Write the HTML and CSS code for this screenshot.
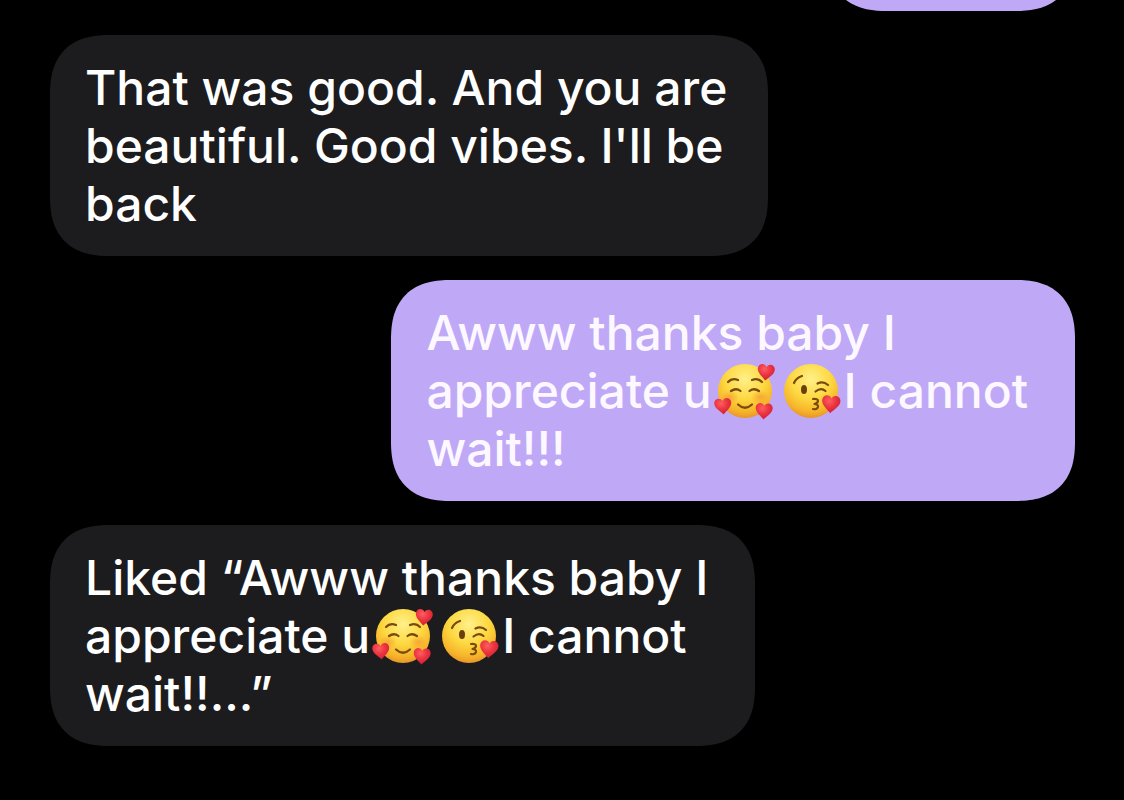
FILE: index.html
```html
<!DOCTYPE html>
<html lang="en">
<head>
  <meta charset="UTF-8">
  <meta name="viewport" content="width=device-width, initial-scale=1.0">
  <title>Messages</title>
  <link rel="stylesheet" href="styles.css">
</head>
<body>
  <!-- shared emoji drawings -->
  <svg class="defs" width="0" height="0" aria-hidden="true">
    <defs>
      <radialGradient id="skin" cx="50%" cy="28%" r="74%">
        <stop offset="0" stop-color="#fff08a"/>
        <stop offset="0.5" stop-color="#fdd840"/>
        <stop offset="0.82" stop-color="#f6b32a"/>
        <stop offset="1" stop-color="#e59028"/>
      </radialGradient>
      <radialGradient id="blush">
        <stop offset="0" stop-color="#f5822d" stop-opacity="0.5"/>
        <stop offset="1" stop-color="#f5822d" stop-opacity="0"/>
      </radialGradient>
      <radialGradient id="red" cx="40%" cy="30%" r="75%">
        <stop offset="0" stop-color="#fb6060"/>
        <stop offset="0.5" stop-color="#ec3340"/>
        <stop offset="1" stop-color="#c91f35"/>
      </radialGradient>
      <path id="heart" fill="url(#red)" d="M0 8.500C-2 6-8.500 2-8.500-3C-8.500-8-2-9.500 0-5C2-9.500 8.500-8 8.500-3C8.500 2 2 6 0 8.500Z"/>
      <symbol id="hearts-face" viewBox="0 0 66 58">
        <circle cx="33" cy="29" r="27" fill="url(#skin)"/>
        <ellipse cx="18" cy="35" rx="9" ry="7" fill="url(#blush)"/>
        <ellipse cx="48" cy="35" rx="9" ry="7" fill="url(#blush)"/>
        <g fill="none" stroke="#7a4a0c" stroke-width="2.200" stroke-linecap="round">
          <path d="M16 20Q20 15.500 26 18"/>
          <path d="M40 18Q46 15.500 50 20"/>
          <path d="M19 29Q24 25.500 28.500 29"/>
          <path d="M37.500 29Q42 25.500 47 29"/>
          <path d="M26 42.500Q33 49 40 42.500"/>
        </g>
        <use href="#heart" transform="translate(54 10) rotate(6)"/>
        <use href="#heart" transform="translate(11 44) rotate(-5)"/>
        <use href="#heart" transform="translate(52 49) rotate(4)"/>
      </symbol>
      <symbol id="kiss-face" viewBox="0 0 66 58">
        <circle cx="33" cy="29" r="27" fill="url(#skin)"/>
        <ellipse cx="26" cy="27.500" rx="3" ry="4.500" fill="#6b3f0a"/>
        <g fill="none" stroke="#7a4a0c" stroke-width="2.200" stroke-linecap="round" stroke-linejoin="round">
          <path d="M16 21Q18 16 24 14"/>
          <path d="M39.500 21.500Q45 18.500 50 23"/>
          <path d="M37.500 29.500Q43 25 47.500 29"/>
          <path d="M35 37Q40 36.500 40 39Q40 41 36.500 42Q40.500 42.500 40 45Q39 48 35 47"/>
        </g>
        <use href="#heart" transform="translate(53 42) rotate(5) scale(1.08)"/>
      </symbol>
    </defs>
  </svg>

  <main class="thread">
    <div class="bubble sent previous"></div>

    <p class="bubble received">That was good. And you are<br>beautiful. Good vibes. I'll be<br>back</p>

    <p class="bubble sent">Awww thanks baby I<br>appreciate u<svg class="emoji" role="img" aria-label="smiling face with hearts"><use href="#hearts-face"/></svg><svg class="emoji" role="img" aria-label="face blowing a kiss"><use href="#kiss-face"/></svg>I cannot<br>wait!!!</p>

    <p class="bubble received">Liked “Awww thanks baby I<br>appreciate u<svg class="emoji" role="img" aria-label="smiling face with hearts"><use href="#hearts-face"/></svg><svg class="emoji" role="img" aria-label="face blowing a kiss"><use href="#kiss-face"/></svg>I cannot<br>wait!!...”</p>
  </main>
</body>
</html>
```
FILE: styles.css
```css
* {
  box-sizing: border-box;
}

body {
  margin: 0;
  background-color: #000;
  font-family: Inter, "Liberation Sans", sans-serif;
}

.defs {
  position: absolute;
}

/* newest message stays at the bottom, older ones run off the top */
.thread {
  display: flex;
  flex-direction: column;
  justify-content: flex-end;
  gap: 24px;
  height: 100vh;
  padding: 0 49px 54px 50px;
  overflow: hidden;
}

.bubble {
  flex-shrink: 0;
  max-width: 70%;
  margin: 0;
  padding: 24px 47px 23px 35px;
  border-radius: 50px;
  font-size: 48px;
  font-weight: 550;
  line-height: 58px;
  white-space: nowrap;
}

@supports (corner-shape: squircle) {
  .bubble {
    border-radius: 60px;
    corner-shape: superellipse(1.3);
  }
}

.received {
  align-self: flex-start;
  background-color: #1c1c1e;
  color: #fff;
}

.sent {
  align-self: flex-end;
  background-color: #bfa9f7;
  color: #fdf8ff;
}

.previous {
  width: 248px;
  height: 163px;
}

.emoji {
  width: 66px;
  height: 58px;
  vertical-align: top;
}
```
